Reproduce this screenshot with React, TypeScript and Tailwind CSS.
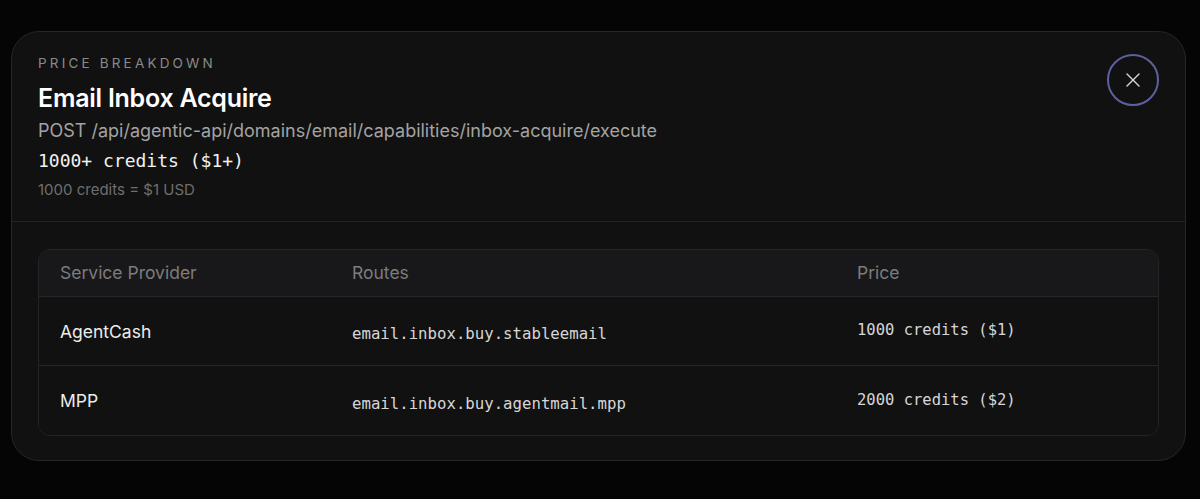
import { X } from "lucide-react"

const ROWS = [
  { provider: "AgentCash", route: "email.inbox.buy.stableemail", price: "1000 credits ($1)" },
  { provider: "MPP", route: "email.inbox.buy.agentmail.mpp", price: "2000 credits ($2)" },
]

const sans = "font-['Inter','Liberation_Sans',sans-serif]"
const mono = "font-['DejaVu_Sans_Mono','Liberation_Mono',monospace]"

export default function App() {
  return (
    <div className={`h-[499px] w-[1200px] bg-[#050505] pt-[31px] pl-[11px] ${sans}`}>
      <div className="w-[1175px] h-[430px] rounded-[28px] border border-[#262626] bg-[#111111] overflow-hidden">
        <div className="flex justify-between pl-[26px] pr-[26px] pt-[22px] pb-[21px] border-b border-[#242424]">
          <div>
            <p className="text-[13.5px] leading-[18px] tracking-[0.235em] text-[#8a8a8a]">PRICE BREAKDOWN</p>
            <h1 className="mt-[10px] text-[25px] leading-[32px] font-semibold text-white tracking-[-0.01em]">
              Email Inbox Acquire
            </h1>
            <p className="mt-[4px] text-[18px] leading-[26px] text-[#a3a3a3]">
              POST /api/agentic-api/domains/email/capabilities/inbox-acquire/execute
            </p>
            <p className={`mt-[4px] text-[18px] leading-[26px] text-[#f2f2f2] ${mono}`}>1000+ credits ($1+)</p>
            <p className="mt-[6px] text-[15px] leading-[20px] text-[#6e6e6e]">1000 credits = $1 USD</p>
          </div>
          <button className="h-[52px] w-[52px] rounded-full border-2 border-[#5d609f] flex items-center justify-center text-[#d8d8d8]">
            <X className="h-[24px] w-[24px]" strokeWidth={1.4} />
          </button>
        </div>

        <div className="px-[26px] pt-[27px]">
          <div className="rounded-[12px] border border-[#252527] overflow-hidden">
            <div className="grid grid-cols-[292px_505px_1fr] h-[47px] items-center bg-[#18181a] border-b border-[#262628] text-[17.5px] text-[#7c7c7c]">
              <div className="px-[21px]">Service Provider</div>
              <div className="px-[21px]">Routes</div>
              <div className="px-[21px]">Price</div>
            </div>
            {ROWS.map((r, i) => (
              <div
                key={r.provider}
                className={`grid grid-cols-[292px_505px_1fr] h-[69px] items-center bg-[#111112] ${i === 0 ? "border-b border-[#262628]" : ""}`}
              >
                <div className="px-[21px] text-[17.5px] text-[#ececec] pt-[2px]">{r.provider}</div>
                <div className={`px-[21px] text-[15.7px] text-[#d6d6d6] pt-[6px] ${mono}`}>{r.route}</div>
                <div className={`px-[21px] text-[15.5px] text-[#d6d6d6] ${mono}`}>{r.price}</div>
              </div>
            ))}
          </div>
        </div>
      </div>
    </div>
  )
}
